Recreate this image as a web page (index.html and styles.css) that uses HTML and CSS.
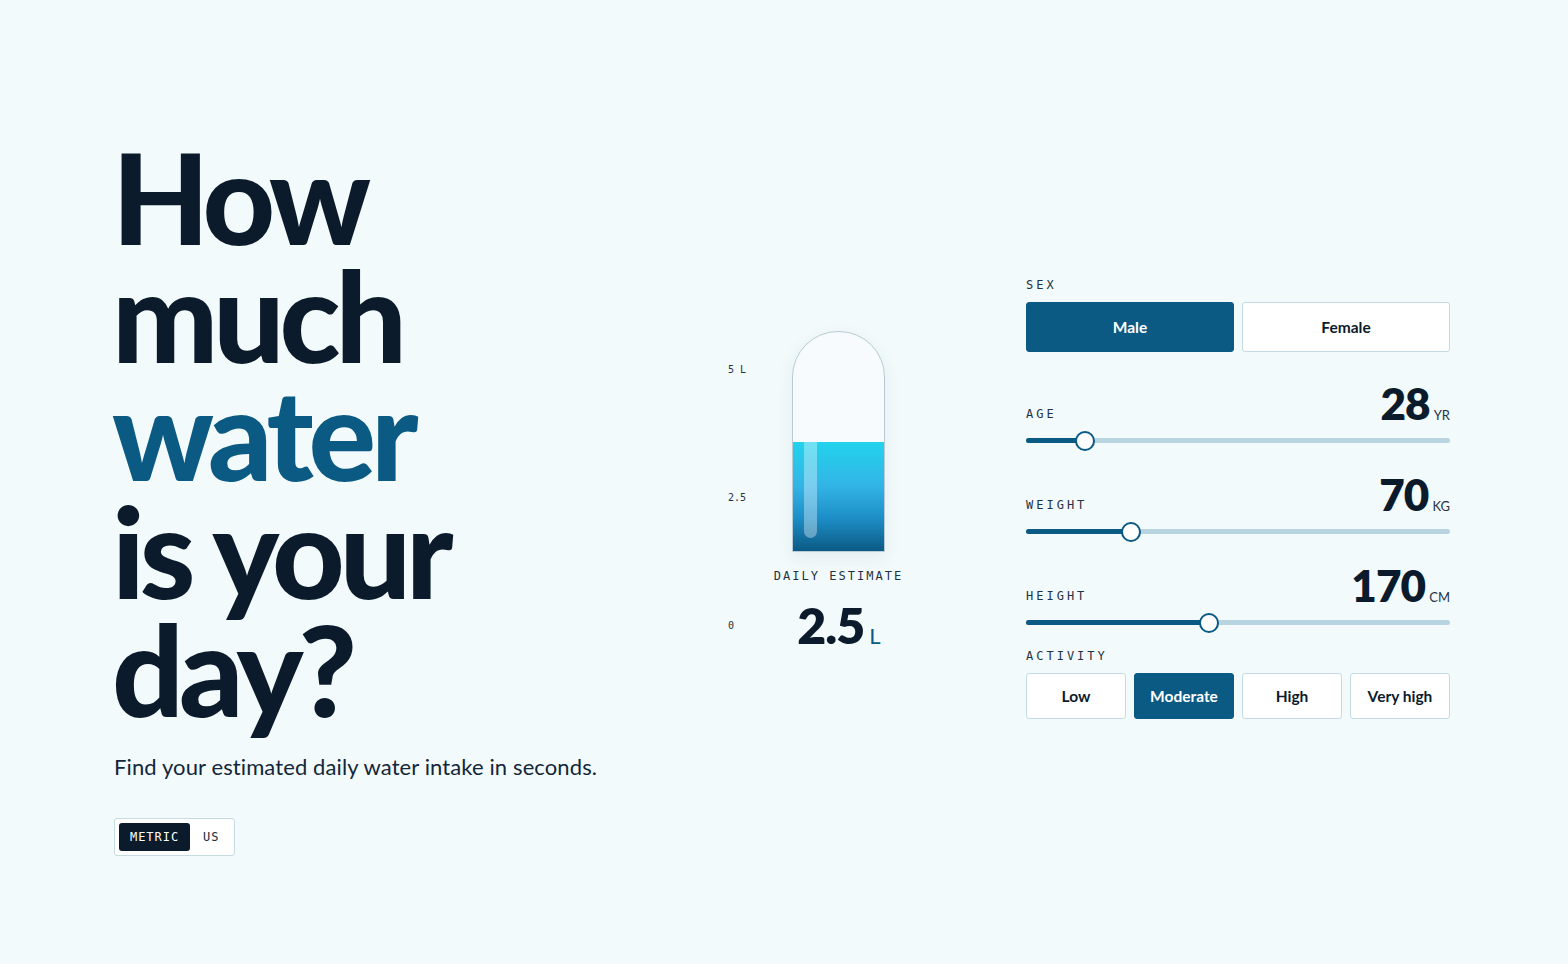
FILE: index.html
```html
<!DOCTYPE html>
<html lang="en">
<head>
<meta charset="utf-8">
<title>Daily water intake</title>
<link rel="stylesheet" href="styles.css">
</head>
<body>
<main class="page">
  <section class="intro">
    <h1 class="headline">How<br>much<br><span class="accent">water</span><br>is your<br>day?</h1>
    <p class="lead">Find your estimated daily water intake in seconds.</p>
    <div class="units">
      <span class="unit active">METRIC</span>
      <span class="unit">US</span>
    </div>
  </section>

  <section class="gauge">
    <div class="scale">
      <span>5 L</span>
      <span>2.5</span>
      <span>0</span>
    </div>
    <div class="gauge-main">
      <div class="glass">
        <div class="fill" style="height:50%"><span class="shine"></span></div>
      </div>
      <div class="est-label">DAILY ESTIMATE</div>
      <div class="est-value">2.5<span class="est-unit">L</span></div>
    </div>
  </section>

  <section class="form">
    <div class="field">
      <div class="label">SEX</div>
      <div class="seg seg-2">
        <button class="opt selected">Male</button>
        <button class="opt">Female</button>
      </div>
    </div>

    <div class="slider-field">
      <div class="slider-head">
        <span class="label">AGE</span>
        <span class="value">28<span class="unit-s">YR</span></span>
      </div>
      <div class="track"><div class="track-fill" style="width:14%"><span class="thumb"></span></div></div>
    </div>

    <div class="slider-field">
      <div class="slider-head">
        <span class="label">WEIGHT</span>
        <span class="value">70<span class="unit-s">KG</span></span>
      </div>
      <div class="track"><div class="track-fill" style="width:24.8%"><span class="thumb"></span></div></div>
    </div>

    <div class="slider-field">
      <div class="slider-head">
        <span class="label">HEIGHT</span>
        <span class="value">170<span class="unit-s">CM</span></span>
      </div>
      <div class="track"><div class="track-fill" style="width:43.2%"><span class="thumb"></span></div></div>
    </div>

    <div class="field activity">
      <div class="label">ACTIVITY</div>
      <div class="seg seg-4">
        <button class="opt small">Low</button>
        <button class="opt small selected">Moderate</button>
        <button class="opt small">High</button>
        <button class="opt small">Very high</button>
      </div>
    </div>
  </section>
</main>
</body>
</html>
```

FILE: styles.css
```css
* { box-sizing: border-box; }
html, body { margin: 0; padding: 0; }
body {
  background: #f2fafb;
  color: #0b1b2b;
  font-family: "Lato", "Noto Sans", sans-serif;
  width: 1568px;
  height: 964px;
  overflow: hidden;
}
.page {
  display: flex;
  align-items: flex-start;
  height: 964px;
  padding: 138px 0 0 114px;
}

/* intro */
.intro { width: 614px; flex: 0 0 614px; }
.headline {
  margin: 0;
  font-family: "Lato", sans-serif;
  font-weight: 900;
  font-size: 126px;
  line-height: 118px;
  letter-spacing: -0.04em;
  color: #0b1b2b;
  margin-left: -2px;
}
.accent { color: #0b5a84; }
.lead {
  margin: 24px 0 0;
  font-size: 22px;
  line-height: 30px;
  letter-spacing: 0.005em;
  color: #13263a;
  font-weight: 400;
}
.units {
  display: inline-flex;
  align-items: center;
  margin-top: 36px;
  padding: 4px;
  border: 1px solid #c7dbe3;
  border-radius: 3px;
  background: #ffffff;
  gap: 2px;
}
.unit {
  font-family: "DejaVu Sans Mono", monospace;
  font-size: 12px;
  letter-spacing: 0.08em;
  color: #1a2b3b;
  padding: 0 11px;
  height: 28px;
  line-height: 28px;
  border-radius: 3px;
}
.unit.active { background: #0b1b2b; color: #ffffff; }

/* gauge */
.gauge {
  display: flex;
  align-items: flex-start;
  padding-top: 193px;
  flex: 0 0 auto;
}
.scale {
  display: flex;
  flex-direction: column;
  justify-content: space-between;
  width: 48px;
  height: 268px;
  margin-top: 33px;
  font-family: "DejaVu Sans Mono", monospace;
  font-size: 10px;
  line-height: 12px;
  color: #1f3344;
}
.gauge-main {
  display: flex;
  flex-direction: column;
  align-items: center;
  width: 125px;
}
.glass {
  position: relative;
  width: 93px;
  height: 221px;
  border: 1px solid #b9cbd4;
  border-radius: 46px 46px 0 0;
  background: #f7fbfd;
  display: flex;
  align-items: flex-end;
  overflow: hidden;
  box-shadow: 0 6px 18px rgba(20, 70, 100, 0.07);
}
.fill {
  position: relative;
  width: 100%;
  background: linear-gradient(180deg, #22d3ec 0%, #33b4e6 40%, #1d8ec7 70%, #0b5a84 100%);
}
.shine {
  position: absolute;
  left: 11px;
  top: 0;
  width: 13px;
  bottom: 13px;
  border-radius: 0 0 7px 7px;
  background: rgba(255, 255, 255, 0.35);
}
.est-label {
  margin-top: 17px;
  font-family: "DejaVu Sans Mono", monospace;
  font-size: 12px;
  letter-spacing: 0.17em;
  color: #1f3344;
  white-space: nowrap;
}
.est-value {
  margin-top: 16px;
  font-family: "Lato", sans-serif;
  font-weight: 800;
  font-size: 50px;
  line-height: 52px;
  letter-spacing: -0.02em;
  color: #0b1b2b;
}
.est-unit {
  font-size: 22px;
  font-weight: 400;
  color: #0b5a84;
  margin-left: 5px;
}

/* form */
.form {
  width: 424px;
  flex: 0 0 424px;
  margin-left: 125px;
  padding-top: 140px;
}
.label {
  font-family: "DejaVu Sans Mono", monospace;
  font-size: 12px;
  letter-spacing: 0.25em;
  color: #1f3344;
  line-height: 14px;
}
.slider-head .label { position: relative; top: -2px; }
.seg { display: grid; gap: 8px; margin-top: 10px; }
.seg-2 { grid-template-columns: 1fr 1fr; }
.seg-4 { grid-template-columns: repeat(4, 1fr); }
.opt {
  height: 50px;
  border: 1px solid #c5dae3;
  border-radius: 3px;
  background: #ffffff;
  font-family: "Lato", sans-serif;
  font-size: 15.5px;
  font-weight: 700;
  color: #0b1b2b;
  padding: 0;
}
.opt.small { height: 46px; }
.opt.selected { background: #0b5a84; border-color: #0b5a84; color: #ffffff; }

.slider-field { margin-top: 29px; }
.slider-head {
  display: flex;
  justify-content: space-between;
  align-items: baseline;
}
.value {
  font-family: "Lato", sans-serif;
  font-weight: 800;
  font-size: 44px;
  line-height: 44px;
  letter-spacing: -0.02em;
  color: #0b1b2b;
}
.unit-s {
  font-size: 13px;
  line-height: 1;
  font-weight: 400;
  letter-spacing: 0;
  margin-left: 4px;
  color: #1f3344;
}
.track {
  position: relative;
  margin-top: 13px;
  height: 5px;
  border-radius: 3px;
  background: #b8d4e0;
}
.track-fill {
  position: relative;
  height: 5px;
  border-radius: 3px;
  background: #0b5a84;
}
.thumb {
  position: absolute;
  right: -10px;
  top: -7.5px;
  width: 20px;
  height: 20px;
  border-radius: 50%;
  background: #ffffff;
  border: 2px solid #0b5a84;
}
.activity { margin-top: 24px; }
```
